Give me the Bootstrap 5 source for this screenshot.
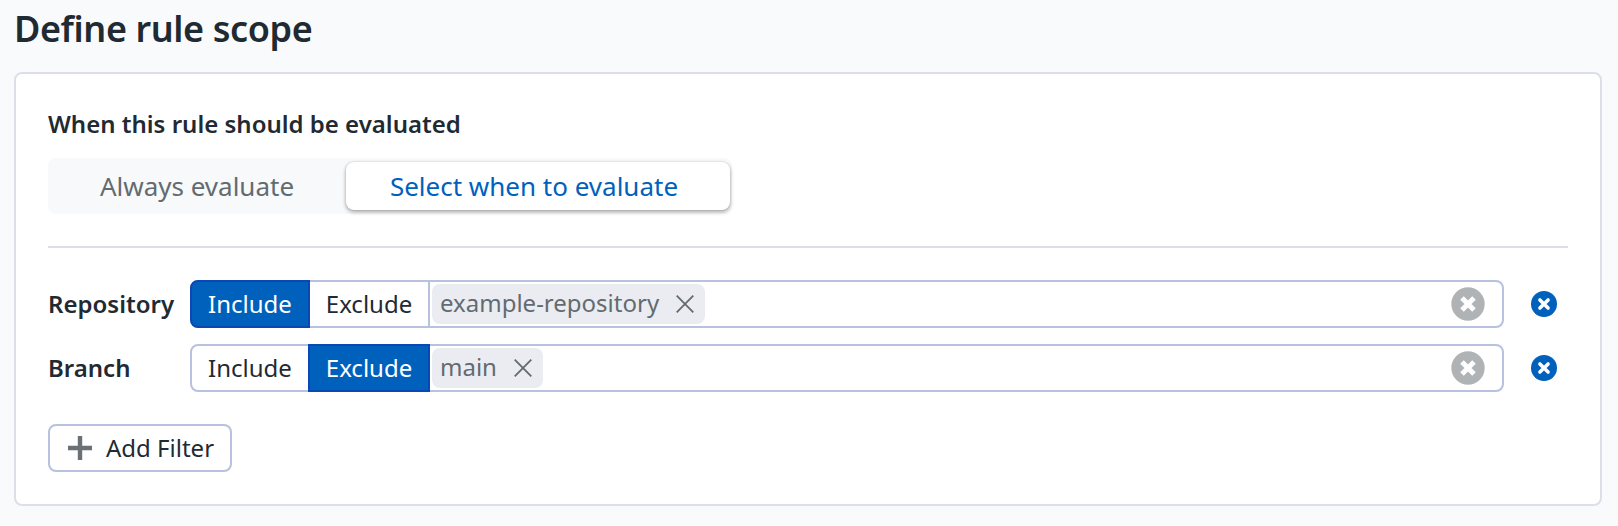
<!DOCTYPE html>
<html lang="en">
<head>
<meta charset="utf-8">
<title>Define rule scope</title>
<link href="https://cdn.jsdelivr.net/npm/bootstrap@5.3.0/dist/css/bootstrap.min.css" rel="stylesheet">
<style>
  body { background: #f9fafc; color: #1f2a33; font: 400 24px/1.5 "Noto Sans", sans-serif; height: 526px; padding: 0 16px 0 14px; overflow: hidden; }
  h1 { font-size: 36px; font-weight: 600; line-height: 58px; height: 72px; letter-spacing: -.4px; }
  h2 { font-size: 24px; font-weight: 600; line-height: 36px; }
  .scope-card { height: 434px; border: 2px solid #dcdfea; border-radius: 8px; padding: 32px; }
  .segments { background: #f8f9fb; border-radius: 8px; width: 684px; height: 56px; padding: 4px 2px 4px 0; margin-top: 16px; font-size: 26px; }
  .segment { height: 48px; color: #626b70; }
  .segment.chosen { width: 384px; padding-right: 8px; background: #fff; color: #0061bd; border-radius: 8px; box-shadow: 0 2px 4px rgba(0,0,0,.33), 0 0 2px rgba(0,0,0,.16); }
  .divider { height: 2px; background: #dcdfea; margin: 32px 0; }
  .filters { gap: 16px; }
  .filter { height: 48px; }
  .filter-name { width: 142px; font-weight: 600; }
  .field { width: 1314px; height: 48px; border: 2px solid #b8c1dd; border-radius: 8px; }
  .mode { height: 48px; margin: -2px 0; border: 2px solid transparent; padding: 0; border-radius: 0; font-size: 24px; line-height: 1; color: #1f2a33; white-space: nowrap; }
  .mode-in { width: 120px; margin-left: -2px; border-radius: 8px 0 0 8px; }
  .mode-ex { width: 122px; margin-left: -2px; border-right-color: #b8c1dd; }
  .mode.on { background: #0061bd; border-color: #0b47b5; color: #fff; }
  .chip { height: 40px; margin-left: 2px; padding: 0 11px 2px 8px; border-radius: 8px; background: #ebecf2; color: #626b70; }
  .chip svg { margin-top: 2px; }
  .clear { margin: 0 17px 0 auto; color: #b0b3b6; }
  .drop { margin: 0 11px 0 auto; color: #0061bd; }
  .add { width: 184px; height: 48px; margin-top: 32px; padding: 0 0 0 18px; border: 2px solid #b8c1dd; border-radius: 8px; font-size: 24px; line-height: 1; color: #1f2a33; gap: 14px; white-space: nowrap; }
  svg { display: block; flex: none; }
</style>
</head>
<body>
<svg width="0" height="0" class="position-absolute" aria-hidden="true">
  <symbol id="thin-x" viewBox="0 0 18 18"><path d="M.7.7 17.3 17.3M17.3.7.7 17.3" fill="none" stroke="#626b70" stroke-width="1.8"/></symbol>
  <symbol id="round-x" viewBox="0 0 34 34"><circle cx="17" cy="17" r="16.7" fill="currentColor"/><path d="M11 11 23 23M23 11 11 23" fill="none" stroke="#fff" stroke-width="5"/></symbol>
  <symbol id="drop-x" viewBox="0 0 26 26"><circle cx="13" cy="13" r="13" fill="currentColor"/><path d="M8.9 8.9 17.1 17.1M17.1 8.9 8.9 17.1" fill="none" stroke="#fff" stroke-width="3.5" stroke-linecap="round"/></symbol>
</svg>
<h1 class="m-0">Define rule scope</h1>
<main class="scope-card bg-white">
  <h2 class="m-0">When this rule should be evaluated</h2>
  <div class="segments d-flex">
    <div class="segment flex-fill d-flex align-items-center justify-content-center">Always evaluate</div>
    <div class="segment chosen d-flex align-items-center justify-content-center">Select when to evaluate</div>
  </div>
  <div class="divider"></div>
  <div class="filters d-flex flex-column">
    <div class="filter d-flex align-items-center">
      <div class="filter-name">Repository</div>
      <div class="field d-flex align-items-center">
        <button class="btn mode mode-in on">Include</button>
        <button class="btn mode mode-ex">Exclude</button>
        <div class="chip d-flex align-items-center justify-content-between" style="width:273px"><span>example-repository</span><svg width="18" height="18"><use href="#thin-x"/></svg></div>
        <svg class="clear" width="34" height="34"><use href="#round-x"/></svg>
      </div>
      <svg class="drop" width="26" height="26"><use href="#drop-x"/></svg>
    </div>
    <div class="filter d-flex align-items-center">
      <div class="filter-name">Branch</div>
      <div class="field d-flex align-items-center">
        <button class="btn mode mode-in">Include</button>
        <button class="btn mode mode-ex on">Exclude</button>
        <div class="chip d-flex align-items-center justify-content-between" style="width:111px"><span>main</span><svg width="18" height="18"><use href="#thin-x"/></svg></div>
        <svg class="clear" width="34" height="34"><use href="#round-x"/></svg>
      </div>
      <svg class="drop" width="26" height="26"><use href="#drop-x"/></svg>
    </div>
  </div>
  <button class="btn add d-flex align-items-center"><svg width="24" height="24" viewBox="0 0 24 24"><path d="M12 0v24M0 12h24" stroke="#6a7175" stroke-width="4.4"/></svg>Add Filter</button>
</main>
<script src="https://cdn.jsdelivr.net/npm/bootstrap@5.3.0/dist/js/bootstrap.bundle.min.js"></script>
</body>
</html>
